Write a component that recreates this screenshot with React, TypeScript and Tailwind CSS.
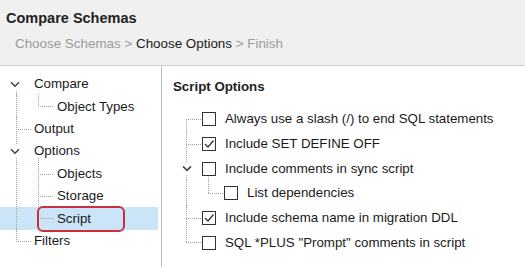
import React from "react";

const font = { fontFamily: '"Liberation Sans", Arial, sans-serif' };
const LINE = "#a3a3a3";

type Seg =
  | { t: "v"; x: number; from: "top" | "mid" | "below"; to: "mid" | "bottom" | "above" }
  | { t: "h"; x1: number; x2: number };

// A tree-connector drawing for one row: dotted guides plus an optional chevron.
function Gutter({
  width,
  height,
  segs,
  chevronX,
}: {
  width: number;
  height: number;
  segs: Seg[];
  chevronX?: number;
}) {
  const mid = height / 2;
  const y = (p: string) =>
    p === "top" ? -1 : p === "bottom" ? height + 1 : p === "mid" ? mid : p === "below" ? mid + 7 : mid - 6;
  return (
    <svg width={width} height={height} className="shrink-0 overflow-visible block">
      {segs.map((s, i) =>
        s.t === "v" ? (
          <line
            key={i}
            x1={s.x + 0.5}
            x2={s.x + 0.5}
            y1={y(s.from)}
            y2={y(s.to)}
            stroke={LINE}
            strokeDasharray="1 1"
          />
        ) : (
          <line
            key={i}
            x1={s.x1}
            x2={s.x2}
            y1={Math.round(mid) + 0.5}
            y2={Math.round(mid) + 0.5}
            stroke={LINE}
            strokeDasharray="1 1"
          />
        )
      )}
      {chevronX !== undefined && (
        <path
          d={`M${chevronX - 4} ${mid - 2} L${chevronX} ${mid + 2} L${chevronX + 4} ${mid - 2}`}
          fill="none"
          stroke="#444"
          strokeWidth="1.5"
        />
      )}
    </svg>
  );
}

function Check({ checked }: { checked?: boolean }) {
  return (
    <div className="w-[14px] h-[14px] border border-[#333] bg-white flex items-center justify-center shrink-0">
      {checked && (
        <svg width="12" height="12" viewBox="0 0 12 12">
          <path d="M2 6 L5 9 L10.5 2.5" fill="none" stroke="#333" strokeWidth="1.3" />
        </svg>
      )}
    </div>
  );
}

type TreeRow = { label: string; level: number; chevron?: boolean; selected?: boolean; segs: Seg[] };

const L_ROW = 22.4;
const leftRows: TreeRow[] = [
  { label: "Compare", level: 0, chevron: true, segs: [{ t: "v", x: 16, from: "below", to: "bottom" }] },
  {
    label: "Object Types",
    level: 1,
    segs: [
      { t: "v", x: 16, from: "top", to: "bottom" },
      { t: "v", x: 38, from: "top", to: "mid" },
      { t: "h", x1: 38, x2: 53 },
    ],
  },
  {
    label: "Output",
    level: 0,
    segs: [
      { t: "v", x: 16, from: "top", to: "bottom" },
      { t: "h", x1: 16, x2: 31 },
    ],
  },
  {
    label: "Options",
    level: 0,
    chevron: true,
    segs: [
      { t: "v", x: 16, from: "top", to: "above" },
      { t: "v", x: 16, from: "below", to: "bottom" },
      { t: "v", x: 38, from: "below", to: "bottom" },
    ],
  },
  {
    label: "Objects",
    level: 1,
    segs: [
      { t: "v", x: 16, from: "top", to: "bottom" },
      { t: "v", x: 38, from: "top", to: "bottom" },
      { t: "h", x1: 38, x2: 53 },
    ],
  },
  {
    label: "Storage",
    level: 1,
    segs: [
      { t: "v", x: 16, from: "top", to: "bottom" },
      { t: "v", x: 38, from: "top", to: "bottom" },
      { t: "h", x1: 38, x2: 53 },
    ],
  },
  {
    label: "Script",
    level: 1,
    selected: true,
    segs: [
      { t: "v", x: 16, from: "top", to: "bottom" },
      { t: "v", x: 38, from: "top", to: "mid" },
      { t: "h", x1: 38, x2: 53 },
    ],
  },
  {
    label: "Filters",
    level: 0,
    segs: [
      { t: "v", x: 16, from: "top", to: "mid" },
      { t: "h", x1: 16, x2: 31 },
    ],
  },
];

type OptRow = { label: string; checked?: boolean; level: number; chevron?: boolean; segs: Seg[] };

const R_ROW = 24.7;
const optRows: OptRow[] = [
  {
    label: "Always use a slash (/) to end SQL statements",
    level: 0,
    segs: [
      { t: "v", x: 24, from: "mid", to: "bottom" },
      { t: "h", x1: 24, x2: 40 },
    ],
  },
  {
    label: "Include SET DEFINE OFF",
    level: 0,
    checked: true,
    segs: [
      { t: "v", x: 24, from: "top", to: "bottom" },
      { t: "h", x1: 24, x2: 40 },
    ],
  },
  {
    label: "Include comments in sync script",
    level: 0,
    chevron: true,
    segs: [
      { t: "v", x: 24, from: "top", to: "above" },
      { t: "v", x: 24, from: "below", to: "bottom" },
      { t: "v", x: 46, from: "below", to: "bottom" },
    ],
  },
  {
    label: "List dependencies",
    level: 1,
    segs: [
      { t: "v", x: 24, from: "top", to: "bottom" },
      { t: "v", x: 46, from: "top", to: "mid" },
      { t: "h", x1: 46, x2: 62 },
    ],
  },
  {
    label: "Include schema name in migration DDL",
    level: 0,
    checked: true,
    segs: [
      { t: "v", x: 24, from: "top", to: "bottom" },
      { t: "h", x1: 24, x2: 40 },
    ],
  },
  {
    label: 'SQL *PLUS "Prompt" comments in script',
    level: 0,
    segs: [
      { t: "v", x: 24, from: "top", to: "mid" },
      { t: "h", x1: 24, x2: 40 },
    ],
  },
];

export default function App() {
  return (
    <div
      className="w-[525px] h-[267px] bg-white text-[13.3px] text-[#1a1a1a] overflow-hidden flex flex-col"
      style={font}
    >
      <div className="h-[66px] bg-[#f0f0f0] border-b border-[#cfcfcf] shrink-0 px-[6px] pt-[9px]">
        <div className="font-bold text-[14.5px] leading-[18px] text-[#222]">Compare Schemas</div>
        <div className="mt-[8px] pl-[9px] leading-[18px] text-[13.4px]">
          <span className="text-[#9b9b9b]">Choose Schemas &gt; </span>
          <span className="text-[#1a1a1a]">Choose Options</span>
          <span className="text-[#9b9b9b]"> &gt; Finish</span>
        </div>
      </div>
      <div className="flex flex-1 min-h-0">
        <div className="w-[162px] border-r border-[#bdbdbd] pt-[7px] shrink-0 flex flex-col">
          {leftRows.map((r) => (
            <div
              key={r.label}
              className={`h-[22.4px] flex items-center ${r.selected ? "bg-[#cce4f7] mr-[3px]" : ""}`}
            >
              <Gutter
                width={r.level === 0 ? 34 : 57}
                height={L_ROW}
                segs={r.segs}
                chevronX={r.chevron ? 15 : undefined}
              />
              <span className="relative whitespace-nowrap">
                {r.selected && (
                  <span className="absolute left-[-20px] right-[-34px] top-[-3px] bottom-[-3px] border-2 border-[#c8303c] rounded-[6px]" />
                )}
                {r.label}
              </span>
            </div>
          ))}
        </div>
        <div className="flex-1 pt-[12px] flex flex-col">
          <div className="pl-[11px] font-bold leading-[18px] text-[#222]">Script Options</div>
          <div className="mt-[11px] flex flex-col">
            {optRows.map((r) => (
              <div key={r.label} className="h-[24.7px] flex items-center">
                <Gutter
                  width={r.level === 0 ? 40 : 62}
                  height={R_ROW}
                  segs={r.segs}
                  chevronX={r.chevron ? 25 : undefined}
                />
                <div className="flex items-center gap-[9px]">
                  <Check checked={r.checked} />
                  <span className="whitespace-nowrap">{r.label}</span>
                </div>
              </div>
            ))}
          </div>
        </div>
      </div>
    </div>
  );
}
